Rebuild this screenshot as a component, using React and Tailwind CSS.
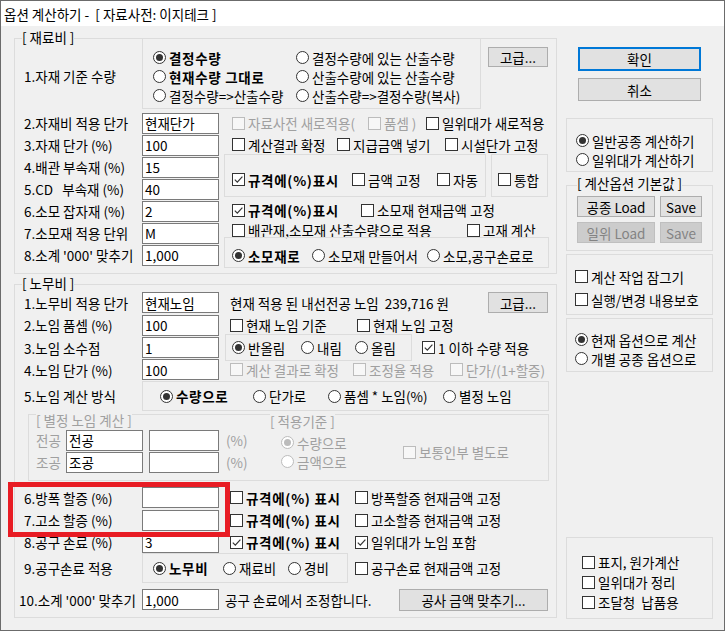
import React from 'react';

const FONT = "font-[family-name:'Noto_Sans_CJK_KR','Noto_Sans',sans-serif]";

// 13px Windows style check box
function Box({ checked, disabled }) {
  return (
    <span
      className={`flex h-[13px] w-[13px] shrink-0 items-center justify-center border ${
        disabled ? 'border-[#bcbcbc] bg-[#f7f7f7]' : 'border-[#333333] bg-white'
      }`}
    >
      {checked && (
        <svg viewBox="0 0 11 11" className="h-[11px] w-[11px]">
          <path d="M1.8 5.6 L4.3 8.1 L9.4 2.6" fill="none" stroke={disabled ? '#bcbcbc' : '#333333'} strokeWidth="1.2" />
        </svg>
      )}
    </span>
  );
}

function Dot({ checked, disabled }) {
  return (
    <span
      className={`flex h-[13px] w-[13px] shrink-0 items-center justify-center rounded-full border bg-white ${
        disabled ? 'border-[#bcbcbc]' : 'border-[#333333]'
      }`}
    >
      {checked && <span className={`h-[7px] w-[7px] rounded-full ${disabled ? 'bg-[#bcbcbc]' : 'bg-[#333333]'}`} />}
    </span>
  );
}

function Chk({ checked, disabled, bold, w = '', className = '', children }) {
  return (
    <div
      className={`flex shrink-0 items-center gap-[3px] whitespace-pre ${w} ${className} ${
        disabled ? 'text-[#a0a0a0]' : 'text-black'
      }`}
    >
      <Box checked={checked} disabled={disabled} />
      <span className={bold ? 'font-bold tracking-[0.7px]' : ''}>{children}</span>
    </div>
  );
}

function Rad({ checked, disabled, bold, w = '', className = '', children }) {
  return (
    <div
      className={`flex shrink-0 items-center gap-[3px] whitespace-pre ${w} ${className} ${
        disabled ? 'text-[#a0a0a0]' : 'text-black'
      }`}
    >
      <Dot checked={checked} disabled={disabled} />
      <span className={bold ? 'font-bold tracking-[0.7px]' : ''}>{children}</span>
    </div>
  );
}

function Field({ value, w = 'w-[77px]', className = '' }) {
  return (
    <div className={`flex h-[21px] shrink-0 items-center border border-[#7a7a7a] bg-white pl-[2px] ${w} ${className}`}>
      {value}
    </div>
  );
}

function Btn({ children, className = '', disabled, primary }) {
  return (
    <div
      className={`flex shrink-0 items-center justify-center whitespace-pre ${className} ${
        primary
          ? 'border-2 border-[#0078d7] bg-[#e1e1e1]'
          : disabled
          ? 'border border-[#bfbfbf] bg-[#cccccc] text-[#838383]'
          : 'border border-[#adadad] bg-[#e1e1e1]'
      }`}
    >
      {children}
    </div>
  );
}

const materialRows = [
  ['2.자재비 적용 단가', '현재단가'],
  ['3.자재 단가 (%)', '100'],
  ['4.배관 부속재 (%)', '15'],
  ['5.CD   부속재 (%)', '40'],
  ['6.소모 잡자재 (%)', '2'],
  ['7.소모재 적용 단위', 'M'],
  ["8.소계 '000' 맞추기", '1,000'],
];

export default function App() {
  return (
    <div
      className={`${FONT} relative h-[631px] w-[725px] overflow-hidden border border-[#6b6b6b] bg-[#f0f0f0] text-[13.5px] leading-[16px] text-black`}
    >
      {/* 타이틀바 */}
      <div className="flex h-[25px] items-center whitespace-pre bg-white pl-[3px]">옵션 계산하기 -  [ 자료사전: 이지테크 ]</div>

      <div className="flex">
        {/* 왼쪽 */}
        <div className="ml-[13px] mt-[12px] flex w-[543px] flex-col">
          {/* 재료비 */}
          <div className="relative h-[236px] w-[543px] border border-[#dcdcdc]">
            <span className="absolute left-[7px] top-[-10px] whitespace-pre bg-[#f0f0f0]">[ 재료비 ]</span>

            <div className="-mt-[1px] flex items-start pl-[9px]">
              <div className="flex h-[71px] w-[118px] items-center pt-[4px]">1.자재 기준 수량</div>
              <div className="h-[71px] w-[339px] border border-[#dcdcdc] pl-[10px] pt-[9px]">
                <div className="flex h-[19px] items-center">
                  <Rad checked bold w="w-[143px]">결정수량</Rad>
                  <Rad>결정수량에 있는 산출수량</Rad>
                </div>
                <div className="flex h-[19px] items-center">
                  <Rad bold w="w-[143px]">현재수량 그대로</Rad>
                  <Rad>산출수량에 있는 산출수량</Rad>
                </div>
                <div className="flex h-[19px] items-center">
                  <Rad w="w-[143px]">결정수량=&gt;산출수량</Rad>
                  <Rad>산출수량=&gt;결정수량(복사)</Rad>
                </div>
              </div>
              <Btn className="ml-[7px] mt-[9px] h-[20px] w-[60px]">고급...</Btn>
            </div>

            <div className="mt-[3px] flex">
              <div className="flex w-[204px] flex-col pl-[9px]">
                {materialRows.map(([label, value]) => (
                  <div key={label} className="flex h-[22px] items-center">
                    <div className="w-[118px] whitespace-pre">{label}</div>
                    <Field value={value} />
                  </div>
                ))}
              </div>

              <div className="flex flex-col">
                <div className="flex h-[22px] items-center pl-[13px]">
                  <Chk disabled w="w-[136px]">자료사전 새로적용(</Chk>
                  <Chk disabled w="w-[58px]">품셈 )</Chk>
                  <Chk>일위대가 새로적용</Chk>
                </div>
                <div className="flex h-[21px] items-center pl-[13px]">
                  <Chk w="w-[105px]">계산결과 확정</Chk>
                  <Chk w="w-[108px]">지급금액 넣기</Chk>
                  <Chk>시설단가 고정</Chk>
                </div>
                <div className="-mt-[1px] flex h-[43px]">
                  <div className="ml-[5px] flex w-[262px] items-center border border-[#dcdcdc] pl-[7px] pt-[8px]">
                    <Chk checked bold w="w-[120px]">규격에(%)표시</Chk>
                    <Chk w="w-[85px]">금액 고정</Chk>
                    <Chk>자동</Chk>
                  </div>
                  <div className="ml-[5px] flex w-[57px] items-center border border-[#dcdcdc] pl-[6px] pt-[8px]">
                    <Chk>통합</Chk>
                  </div>
                </div>
                <div className="flex h-[26px] items-center pl-[13px]">
                  <Chk checked bold w="w-[129px]">규격에(%)표시</Chk>
                  <Chk>소모재 현재금액 고정</Chk>
                </div>
                <div className="flex h-[14px] items-center pl-[13px]">
                  <Chk w="w-[235px]">배관재,소모재 산출수량으로 적용</Chk>
                  <Chk>고재 계산</Chk>
                </div>
                <div className="ml-[5px] flex h-[31px] w-[325px] items-center border border-[#dcdcdc] pl-[7px] pt-[6px]">
                  <Rad checked bold w="w-[80px]">소모재로</Rad>
                  <Rad w="w-[115px]">소모재 만들어서</Rad>
                  <Rad>소모,공구손료로</Rad>
                </div>
              </div>
            </div>
          </div>

          {/* 노무비 */}
          <div className="relative mt-[10px] h-[334px] w-[543px] border border-[#dcdcdc] pt-[6px]">
            <span className="absolute left-[7px] top-[-10px] whitespace-pre bg-[#f0f0f0]">[ 노무비 ]</span>

            <div className="flex h-[23px] items-center pl-[9px]">
              <div className="w-[118px]">1.노무비 적용 단가</div>
              <Field value="현재노임" />
              <div className="ml-[11px] w-[258px] whitespace-pre">현재 적용 된 내선전공 노임  239,716 원</div>
              <Btn className="h-[21px] w-[60px]">고급...</Btn>
            </div>
            <div className="flex h-[22px] items-center pl-[9px]">
              <div className="w-[118px]">2.노임 품셈 (%)</div>
              <Field value="100" />
              <Chk className="ml-[11px]" w="w-[127px]">현재 노임 기준</Chk>
              <Chk>현재 노임 고정</Chk>
            </div>
            <div className="flex h-[23px] items-center pl-[9px]">
              <div className="w-[118px]">3.노임 소수점</div>
              <Field value="1" />
              <div className="ml-[6px] flex h-[27px] w-[187px] shrink-0 items-center border border-[#dcdcdc] pl-[6px]">
                <Rad checked w="w-[69px]">반올림</Rad>
                <Rad w="w-[54px]">내림</Rad>
                <Rad>올림</Rad>
              </div>
              <Chk checked className="ml-[10px]">1 이하 수량 적용</Chk>
            </div>
            <div className="flex h-[21px] items-center pl-[9px]">
              <div className="w-[118px]">4.노임 단가 (%)</div>
              <Field value="100" />
              <Chk disabled className="ml-[11px]" w="w-[123px]">계산 결과로 확정</Chk>
              <Chk disabled w="w-[97px]">조정율 적용</Chk>
              <Chk disabled>단가/(1+할증)</Chk>
            </div>
            <div className="mt-[1px] flex h-[30px] items-center pl-[9px]">
              <div className="w-[118px]">5.노임 계산 방식</div>
              <div className="flex h-[30px] w-[407px] items-center border border-[#dcdcdc] pl-[17px]">
                <Rad checked bold w="w-[93px]">수량으로</Rad>
                <Rad w="w-[75px]">단가로</Rad>
                <Rad w="w-[115px]">품셈 * 노임(%)</Rad>
                <Rad>별정 노임</Rad>
              </div>
            </div>

            {/* 별정 노임 계산 */}
            <div className="ml-[13px] mt-[3px] flex h-[67px] w-[521px] border border-[#dcdcdc]">
              <div className="flex w-[241px] flex-col pl-[7px]">
                <span className="relative -mt-[3px] h-[17px] self-start whitespace-pre bg-[#f0f0f0] text-[#a0a0a0]">[ 별정 노임 계산 ]</span>
                <div className="flex h-[22px] items-center">
                  <span className="w-[30px] text-[#a0a0a0]">전공</span>
                  <Field value="전공" />
                  <Field value="" w="w-[70px]" className="ml-[6px]" />
                  <span className="ml-[7px] text-[#a0a0a0]">(%)</span>
                </div>
                <div className="flex h-[22px] items-center">
                  <span className="w-[30px] text-[#a0a0a0]">조공</span>
                  <Field value="조공" />
                  <Field value="" w="w-[70px]" className="ml-[6px]" />
                  <span className="ml-[7px] text-[#a0a0a0]">(%)</span>
                </div>
              </div>
              <div className="-mt-[2px] flex flex-col">
                <span className="relative self-start whitespace-pre bg-[#f0f0f0] text-[#a0a0a0]">[ 적용기준 ]</span>
                <div className="mt-[4px] flex">
                  <div className="w-[133px] pl-[11px]">
                    <div className="flex h-[19px] items-center">
                      <Rad checked disabled>수량으로</Rad>
                    </div>
                    <div className="flex h-[19px] items-center">
                      <Rad disabled>금액으로</Rad>
                    </div>
                  </div>
                  <Chk disabled className="self-center">보통인부 별도로</Chk>
                </div>
              </div>
            </div>

            <div className="mt-[5px] flex h-[23px] items-center pl-[9px]">
              <div className="w-[118px]">6.방폭 할증 (%)</div>
              <Field value="" />
              <Chk bold className="ml-[11px]" w="w-[125px]">규격에(%) 표시</Chk>
              <Chk>방폭할증 현재금액 고정</Chk>
            </div>
            <div className="flex h-[22px] items-center pl-[9px]">
              <div className="w-[118px]">7.고소 할증 (%)</div>
              <Field value="" />
              <Chk bold className="ml-[11px]" w="w-[125px]">규격에(%) 표시</Chk>
              <Chk>고소할증 현재금액 고정</Chk>
            </div>
            <div className="flex h-[22px] items-center pl-[9px]">
              <div className="w-[118px]">8.공구 손료 (%)</div>
              <Field value="3" />
              <Chk checked bold className="ml-[11px]" w="w-[125px]">규격에(%) 표시</Chk>
              <Chk checked>일위대가 노임 포함</Chk>
            </div>
            <div className="flex h-[30px] items-center pl-[9px]">
              <div className="w-[118px]">9.공구손료 적용</div>
              <div className="flex h-[30px] w-[206px] shrink-0 items-center border border-[#dcdcdc] pl-[10px]">
                <Rad checked bold w="w-[70px]">노무비</Rad>
                <Rad w="w-[65px]">재료비</Rad>
                <Rad>경비</Rad>
              </div>
              <Chk className="ml-[7px]">공구손료 현재금액 고정</Chk>
            </div>
            <div className="mt-[5px] flex h-[23px] items-center pl-[9px]">
              <div className="-ml-[5px] w-[123px] whitespace-pre">10.소계 '000' 맞추기</div>
              <Field value="1,000" />
              <div className="ml-[6px] w-[174px]">공구 손료에서 조정합니다.</div>
              <Btn className="h-[22px] w-[149px]">공사 금액 맞추기...</Btn>
            </div>
          </div>
        </div>

        {/* 오른쪽 */}
        <div className="ml-[9px] flex w-[147px] flex-col">
          <Btn primary className="ml-[12px] mt-[21px] h-[24px] w-[123px]">확인</Btn>
          <Btn className="ml-[12px] mt-[7px] h-[23px] w-[123px]">취소</Btn>

          <div className="mt-[17px] h-[54px] border border-[#dcdcdc] pl-[9px] pt-[12px]">
            <div className="flex h-[19px] items-center">
              <Rad checked>일반공종 계산하기</Rad>
            </div>
            <div className="flex h-[19px] items-center">
              <Rad>일위대가 계산하기</Rad>
            </div>
          </div>

          <div className="relative mt-[13px] h-[66px] border border-[#dcdcdc] pl-[10px] pt-[10px]">
            <span className="absolute left-[10px] top-[-11px] whitespace-pre bg-[#f0f0f0]">[ 계산옵션 기본값 ]</span>
            <div className="flex gap-[5px]">
              <Btn className="h-[21px] w-[78px]">공종 Load</Btn>
              <Btn className="h-[21px] w-[42px]">Save</Btn>
            </div>
            <div className="mt-[5px] flex gap-[5px]">
              <Btn disabled className="h-[21px] w-[78px]">일위 Load</Btn>
              <Btn disabled className="h-[21px] w-[42px]">Save</Btn>
            </div>
          </div>

          <div className="mt-[3px] h-[61px] border border-[#dcdcdc] pl-[8px] pt-[10px]">
            <div className="flex h-[23px] items-center">
              <Chk>계산 작업 잠그기</Chk>
            </div>
            <div className="flex h-[23px] items-center">
              <Chk>실행/변경 내용보호</Chk>
            </div>
          </div>

          <div className="mt-[3px] h-[54px] border border-[#dcdcdc] pl-[8px] pt-[11px]">
            <div className="flex h-[19px] items-center">
              <Rad checked>현재 옵션으로 계산</Rad>
            </div>
            <div className="flex h-[19px] items-center">
              <Rad>개별 공종 옵션으로</Rad>
            </div>
          </div>

          <div className="mt-[165px] h-[82px] border border-[#dcdcdc] pl-[15px] pt-[14px]">
            <div className="flex h-[20px] items-center">
              <Chk>표지, 원가계산</Chk>
            </div>
            <div className="flex h-[20px] items-center">
              <Chk>일위대가 정리</Chk>
            </div>
            <div className="flex h-[20px] items-center">
              <Chk>조달청  납품용</Chk>
            </div>
          </div>
        </div>
      </div>

      {/* 강조 표시 */}
      <div className="absolute left-[7px] top-[481px] h-[55px] w-[222px] border-[5px] border-[#e81c24]" />
    </div>
  );
}
